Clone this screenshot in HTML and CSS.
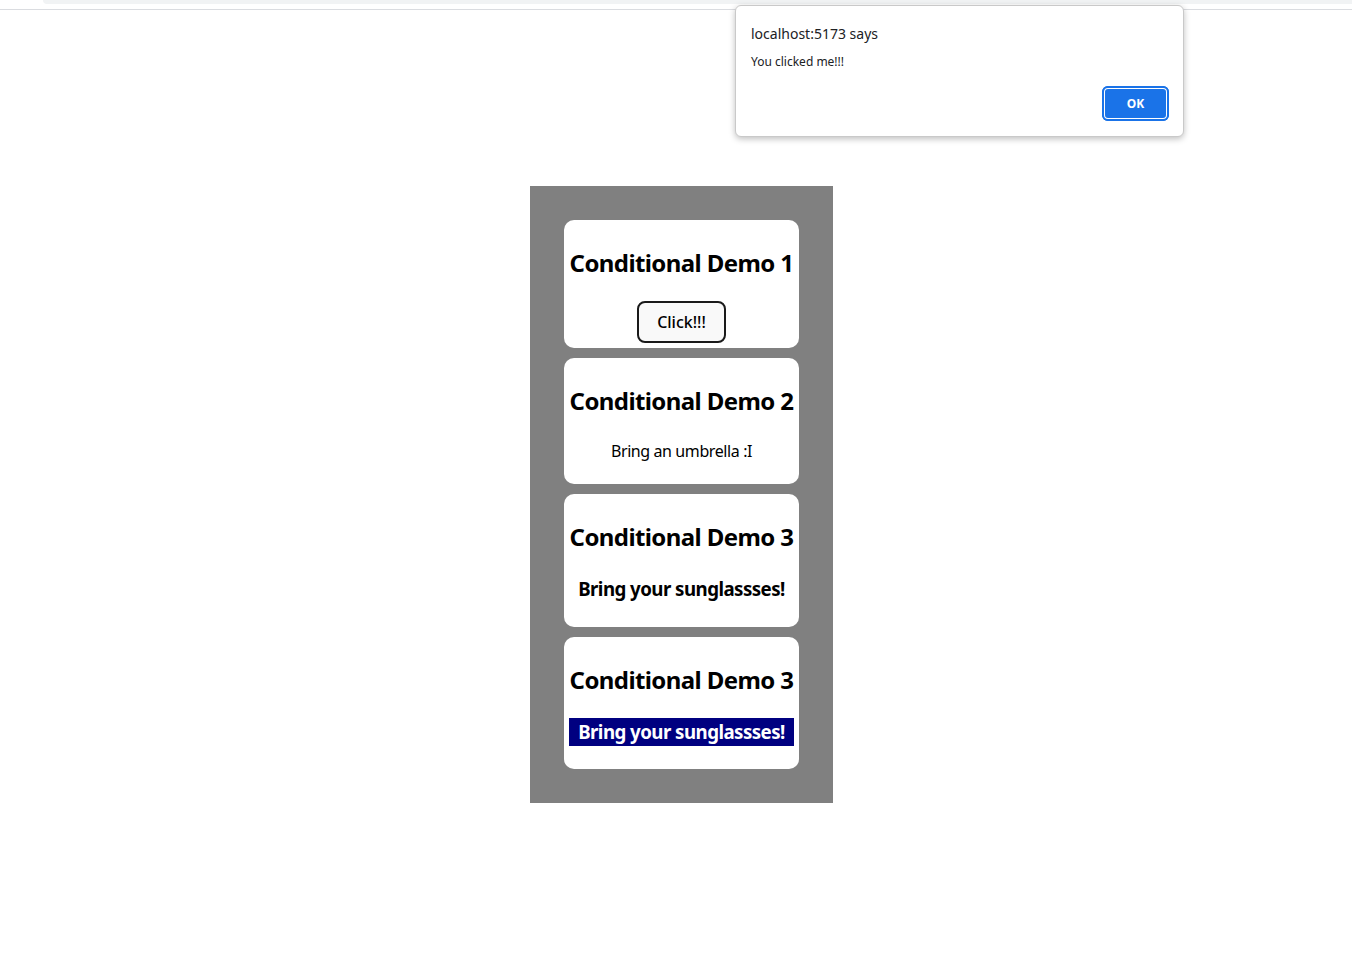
FILE: index.html
```html
<!DOCTYPE html>
<html>
<head>
<meta charset="utf-8">
<link rel="stylesheet" href="styles.css">
</head>
<body>
<div class="chrome">
  <div class="chrome-tab"></div>
</div>
<main class="page">
  <section class="panel">
    <div class="card">
      <h2 class="card-title">Conditional Demo 1</h2>
      <button class="click-btn">Click!!!</button>
    </div>
    <div class="card">
      <h2 class="card-title">Conditional Demo 2</h2>
      <p class="note">Bring an umbrella :I</p>
    </div>
    <div class="card">
      <h2 class="card-title">Conditional Demo 3</h2>
      <h3 class="sun">Bring your sunglassses!</h3>
    </div>
    <div class="card">
      <h2 class="card-title">Conditional Demo 3</h2>
      <h3 class="sun sun-styled">Bring your sunglassses!</h3>
    </div>
  </section>
</main>
<div class="dialog">
  <div class="dialog-title">localhost:5173 says</div>
  <div class="dialog-msg">You clicked me!!!</div>
  <div class="dialog-actions">
    <button class="ok-btn">OK</button>
  </div>
</div>
</body>
</html>
```

FILE: styles.css
```css
html, body {
  margin: 0;
  padding: 0;
  background: #ffffff;
}

body {
  font-family: "Noto Sans", "Open Sans", sans-serif;
  line-height: 1.5;
  color: #000;
  width: 1352px;
  height: 968px;
  overflow: hidden;
  position: relative;
}

.chrome {
  height: 9px;
  border-bottom: 1px solid #dadce0;
  padding-left: 43px;
}

.chrome-tab {
  height: 4px;
  background: #f1f3f4;
  border-bottom-left-radius: 8px;
}

.page {
  display: flex;
  justify-content: center;
  padding-left: 11px;
  padding-top: 176px;
}

.panel {
  background: #808080;
  padding: 34px;
  display: flex;
  flex-direction: column;
  gap: 10px;
}

.card {
  background: #ffffff;
  border-radius: 10px;
  padding: 5px;
  width: 225px;
  text-align: center;
  display: flow-root;
}

.card-title {
  font-size: 24px;
  font-weight: 700;
  line-height: 36px;
  margin: 20px 0;
  white-space: nowrap;
  letter-spacing: -0.6px;
}

.click-btn {
  font-family: "Noto Sans", "Open Sans", sans-serif;
  font-size: 16px;
  line-height: 24px;
  font-weight: 500;
  padding: 7px 17px;
  border: 2px solid #1a1a1a;
  border-radius: 8px;
  background: #f9f9f9;
  color: #000;
  width: 89px;
  height: 42px;
  display: block;
  margin: 0 auto;
}

.note {
  font-size: 16px;
  line-height: 24px;
  margin: 16px 0;
  letter-spacing: -0.4px;
}

.sun {
  font-size: 18.72px;
  line-height: 28px;
  font-weight: 700;
  margin: 18.5px 0;
  white-space: nowrap;
  letter-spacing: -0.55px;
}

.sun-styled {
  background: #000080;
  color: #ffffff;
}

.dialog {
  position: absolute;
  left: 735px;
  top: 5px;
  width: 449px;
  height: 132px;
  box-sizing: border-box;
  background: #ffffff;
  border: 1px solid #c9c9c9;
  border-radius: 6px;
  box-shadow: 0 2px 6px rgba(0, 0, 0, 0.25);
  padding: 16px 15px 0 15px;
  font-family: "Noto Sans", "Open Sans", sans-serif;
  color: #202124;
}

.dialog-title {
  font-size: 14px;
  line-height: 20px;
  margin-top: 2px;
}

.dialog-msg {
  font-size: 12px;
  line-height: 18px;
  margin-top: 9px;
}

.dialog-actions {
  display: flex;
  justify-content: flex-end;
  margin-top: 16px;
}

.ok-btn {
  width: 65px;
  height: 33px;
  box-sizing: border-box;
  background: #1a73e8;
  color: #ffffff;
  font-family: "Noto Sans", "Open Sans", sans-serif;
  font-size: 12px;
  font-weight: 700;
  border: 2px solid #ffffff;
  outline: 2px solid #1a73e8;
  outline-offset: -1px;
  border-radius: 5px;
  box-shadow: 0 0 0 1px #1a73e8;
  padding: 0;
}
```
